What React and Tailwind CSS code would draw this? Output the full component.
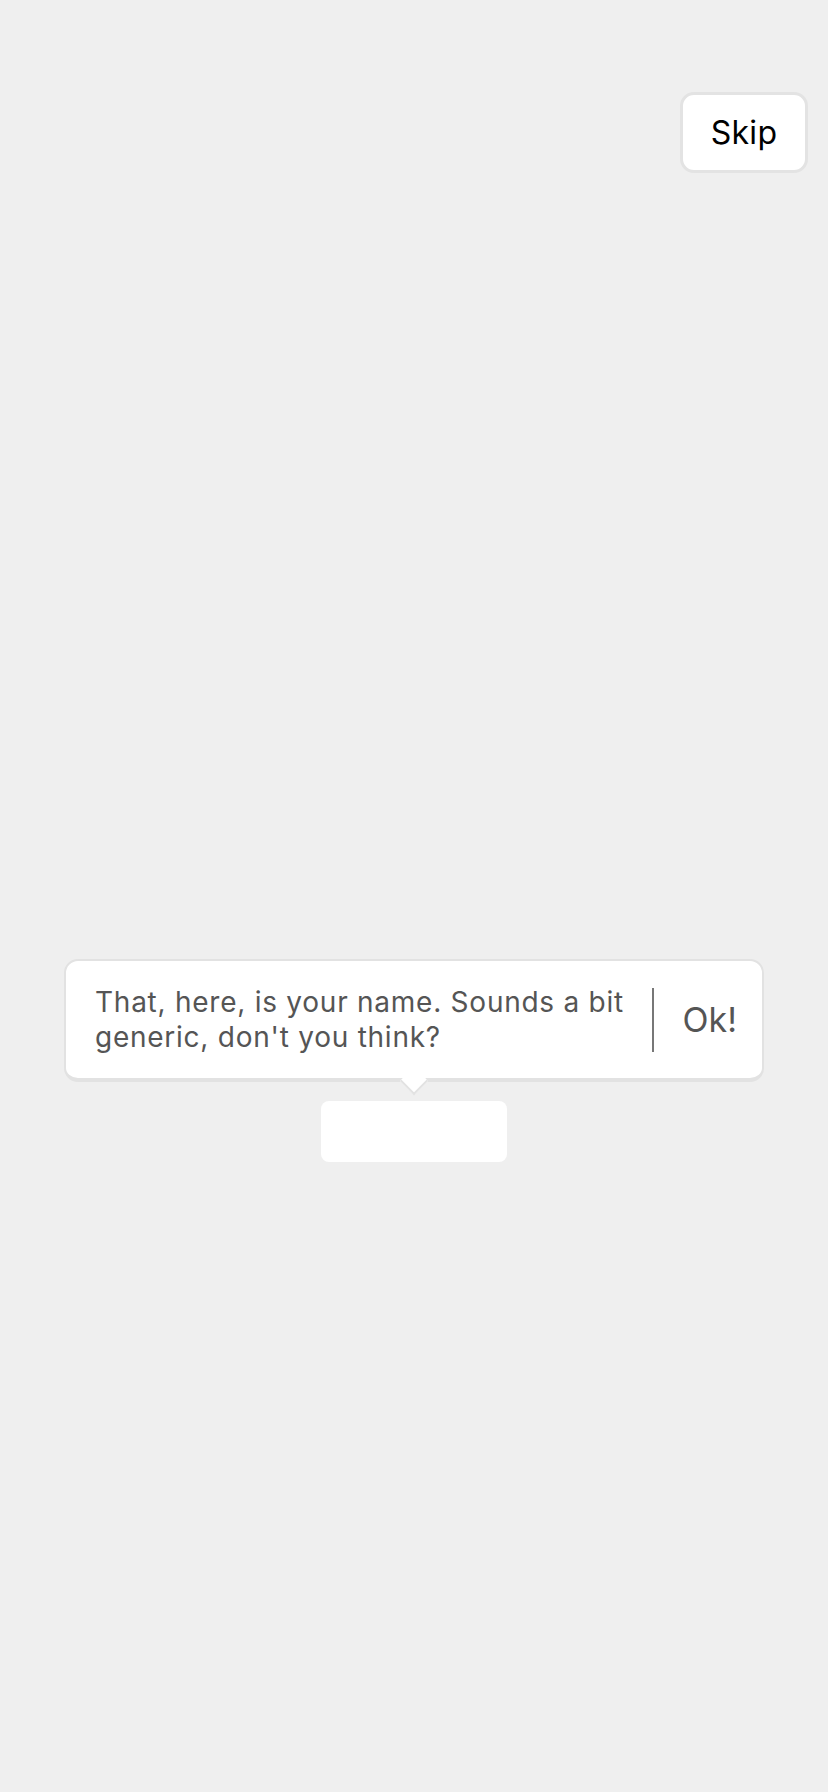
export default function App() {
  return (
    <div className="min-h-screen bg-[#efefef] font-['Inter','Liberation_Sans',sans-serif]">
      {/* Skip */}
      <div className="flex justify-end pt-[92px] pr-[20px]">
        <button className="w-[128px] h-[81px] rounded-[14px] bg-white border-[3px] border-[#e3e3e3] text-[32px] tracking-[0.3px] text-black">
          Skip
        </button>
      </div>

      {/* Hint + target */}
      <div className="mt-[786px] flex flex-col items-center">
        <div className="relative w-[700px] h-[123px] bg-white rounded-[14px] border-2 border-b-[4px] border-[#e2e2e2] flex items-center pl-[29px] pr-[25px]">
          <p className="w-[545px] text-[28px] leading-[35px] tracking-[0.75px] text-[#555555]">
            That, here, is your name. Sounds a bit generic, don't you think?
          </p>
          <div className="w-[2px] h-[64px] bg-[#777777] ml-auto" />
          <span className="ml-[29px] text-[34px] text-[#555555]">Ok!</span>
          <div className="absolute left-1/2 -bottom-[13px] w-[20px] h-[20px] -translate-x-1/2 rotate-45 bg-white border-b-2 border-r-2 border-[#e2e2e2]" />
        </div>
        <div className="mt-[19px] w-[186px] h-[61px] bg-white rounded-[8px]" />
      </div>
    </div>
  )
}
